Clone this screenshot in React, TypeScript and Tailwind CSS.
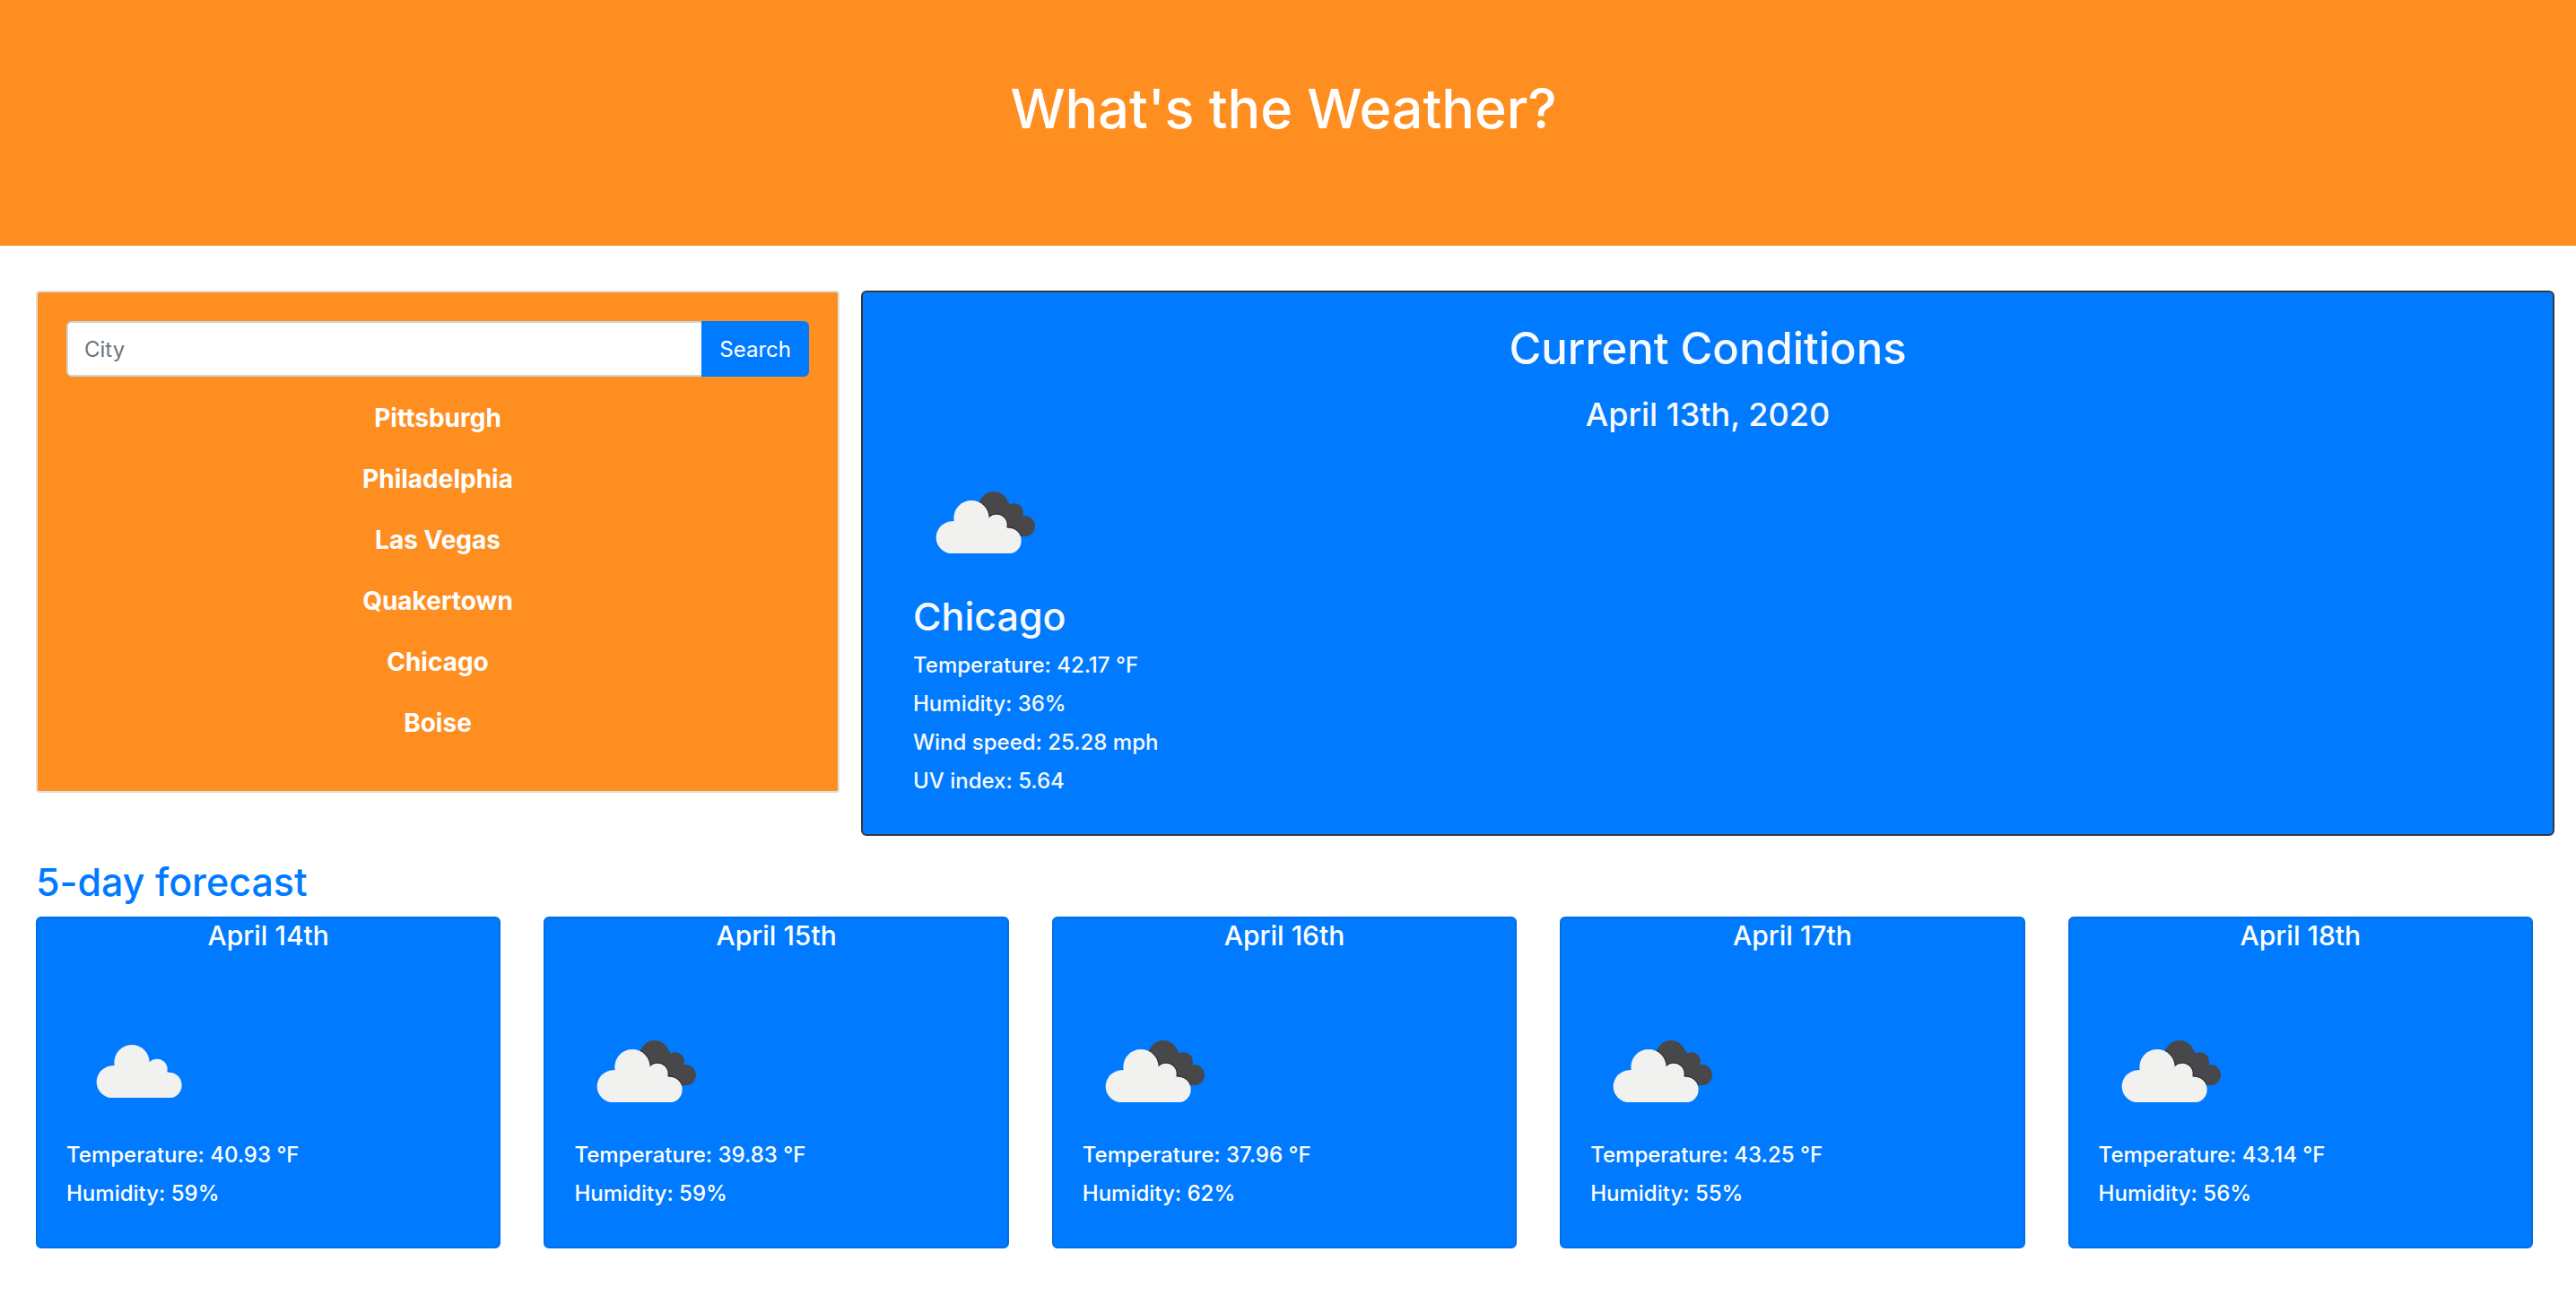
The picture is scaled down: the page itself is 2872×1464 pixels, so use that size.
import { useId, useState } from "react";

const cities = ["Pittsburgh", "Philadelphia", "Las Vegas", "Quakertown", "Chicago", "Boise"];

const forecast = [
  { date: "April 14th", icon: "cloud", temperature: "40.93", humidity: 59 },
  { date: "April 15th", icon: "broken", temperature: "39.83", humidity: 59 },
  { date: "April 16th", icon: "broken", temperature: "37.96", humidity: 62 },
  { date: "April 17th", icon: "broken", temperature: "43.25", humidity: 55 },
  { date: "April 18th", icon: "broken", temperature: "43.14", humidity: 56 },
];

function WhiteCloud() {
  return (
    <>
      <path d="M124 184 H136 L189 173 L274 194 L314 207 V291 H116 Z" />
      <circle cx="125" cy="238" r="54" />
      <circle cx="189" cy="173" r="59" />
      <circle cx="273" cy="196" r="35" />
      <circle cx="313" cy="249" r="43" />
    </>
  );
}

function WeatherIcon({ kind }: { kind: string }) {
  const id = useId();
  const bottom = `bottom-${id}`;
  const dark = `dark-${id}`;
  if (kind === "cloud") {
    return (
      <svg viewBox="0 0 164 152" className="block h-[152px] w-[164px]" role="img" aria-label="Scattered clouds">
        <g transform="translate(10 13) scale(0.3333)" fill="#f1f1f0">
          <clipPath id={bottom}>
            <rect x="0" y="0" width="480" height="291" />
          </clipPath>
          <g clipPath={`url(#${bottom})`}>
            <WhiteCloud />
          </g>
        </g>
      </svg>
    );
  }
  return (
    <svg viewBox="0 0 164 152" className="block h-[152px] w-[164px]" role="img" aria-label="Broken clouds">
      <defs>
        <clipPath id={bottom}>
          <rect x="0" y="0" width="480" height="291" />
        </clipPath>
        <clipPath id={dark}>
          <circle cx="264" cy="134" r="50" />
          <circle cx="333" cy="154" r="30" />
          <circle cx="367" cy="200" r="35" />
          <path d="M230 140 L300 100 L333 150 L372 210 L360 234 L240 234 Z" />
        </clipPath>
      </defs>
      <g transform="translate(2 18) scale(0.3333)">
        <g clipPath={`url(#${dark})`}>
          <rect x="180" y="60" width="240" height="200" fill="#48484a" />
          <g fill="#2c2c2e" stroke="#2c2c2e" strokeWidth="7">
            <WhiteCloud />
          </g>
        </g>
        <g clipPath={`url(#${bottom})`} fill="#f1f1f0">
          <WhiteCloud />
        </g>
      </g>
    </svg>
  );
}

export default function App() {
  const [city, setCity] = useState("");

  return (
    <div className="min-h-screen bg-white font-['Inter',sans-serif] text-[24px] leading-[43px] text-white">
      <header className="bg-[#ff8e21] pt-[82px] pr-[10px] pb-[114px] text-center">
        <h1 className="text-[61px] leading-[78px] font-medium">What's the Weather?</h1>
      </header>

      <main className="pt-[50px] pb-12">
        <div className="grid grid-cols-[28fr_59fr] items-start gap-6 pr-6 pl-10">
          <aside className="rounded-sm border-2 border-[#dfdfdf] bg-[#ff8e21] px-8 pt-8 pb-[42px]">
            <form className="flex" onSubmit={(e) => e.preventDefault()}>
              <input
                type="text"
                aria-label="City"
                placeholder="City"
                value={city}
                onChange={(e) => setCity(e.target.value)}
                className="h-[62px] min-w-0 flex-1 rounded-l-md border-2 border-r-0 border-[#ced4da] bg-white px-[18px] text-[24px] text-[#495057] placeholder:text-[#6c757d]"
              />
              <button type="submit" className="h-[62px] rounded-r-md bg-[#007bff] px-5 text-[24px]">
                Search
              </button>
            </form>
            <ul className="mt-3">
              {cities.map((name) => (
                <li key={name}>
                  <button type="button" className="block h-[68px] w-full text-center text-[28px] font-bold">
                    {name}
                  </button>
                </li>
              ))}
            </ul>
          </aside>

          <section className="rounded-md border-2 border-[#343a40] bg-[#007bff] px-14 pt-8 pb-[38px] font-medium text-[#f8f9fa]">
            <h2 className="text-center text-[49px] leading-[62px]">Current Conditions</h2>
            <p className="mt-4 mb-[14px] text-center text-[36px] leading-[52px]">April 13th, 2020</p>
            <WeatherIcon kind="broken" />
            <h3 className="my-1.5 text-[43px] leading-[54px]">Chicago</h3>
            <p>Temperature: 42.17 °F</p>
            <p>Humidity: 36%</p>
            <p>Wind speed: 25.28 mph</p>
            <p>UV index: 5.64</p>
          </section>
        </div>

        <section className="mt-6 pr-12 pl-10 font-medium">
          <h2 className="text-[43px] leading-[54px] text-[#007bff]">5-day forecast</h2>
          <div className="mt-3 grid grid-cols-5 gap-12">
            {forecast.map((day) => (
              <article key={day.date} className="rounded-md border-2 border-[#006fe6] bg-[#007bff] px-8 pb-[38px]">
                <h3 className="mb-[52px] text-center text-[30px] leading-[38px]">{day.date}</h3>
                <WeatherIcon kind={day.icon} />
                <p>Temperature: {day.temperature} °F</p>
                <p>Humidity: {day.humidity}%</p>
              </article>
            ))}
          </div>
        </section>
      </main>
    </div>
  );
}
